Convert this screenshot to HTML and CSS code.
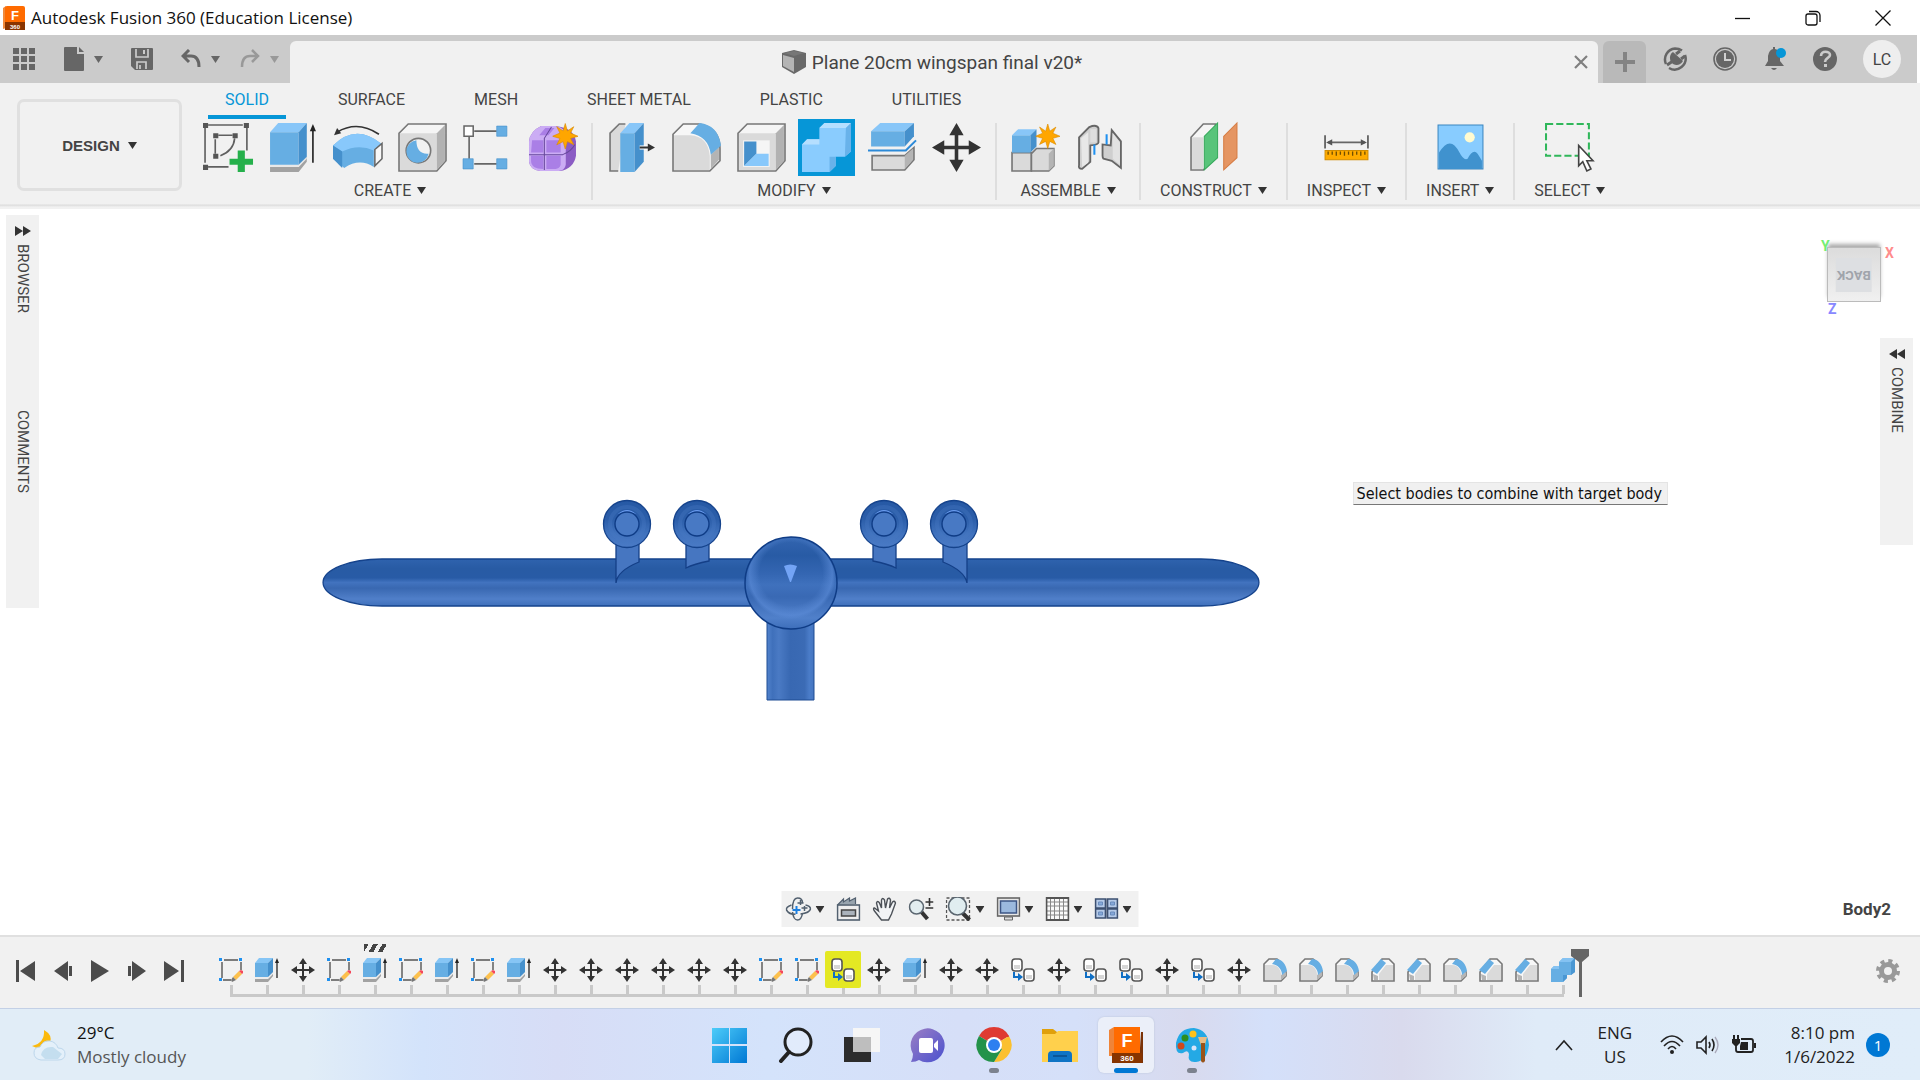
FILE: index.html
```html
<!DOCTYPE html>
<html lang="en">
<head>
    <meta charset="UTF-8">
    <meta name="viewport" content="width=device-width, initial-scale=1.0">
    <title>Autodesk Fusion 360 (Education License)</title>
    <link rel="stylesheet" href="styles.css">
</head>
<body>
    <!-- Shared icons -->
    <svg class="sprite" aria-hidden="true">
        <symbol id="i-sketch" viewBox="0 0 24 24">
            <path d="M3 4v16M5 2h14M22 4v8M4 22h8" stroke="#555" stroke-width="1.4" fill="none"/>
            <path d="M0 0h3v3H0zM20 0h3v3h-3zM0 20h3v3H0z" fill="#1e90f0"/>
            <path d="M14 19l6-6 3 3-6 6z" fill="#fcc04d"/>
            <path d="M20 13l2-1 2 1v2l-1 1z" fill="#f4475a"/>
            <path d="M14 19l3 3-4 2-1-2z" fill="#777"/>
        </symbol>
        <symbol id="i-extrude" viewBox="0 0 24 24">
            <path d="M0 20h13l5-6v4l-5 6H0z" fill="#a2a2a2"/>
            <path d="M0 19h13l5-5v2l-5 5H0z" fill="#ececec"/>
            <path d="M0 5l4-5h14l-5 5z" fill="#86c5f5"/>
            <path d="M0 5h13v14H0z" fill="#66aee3"/>
            <path d="M13 5l5-5v14l-5 5z" fill="#4590cc"/>
            <path d="M22 3v17" stroke="#222" stroke-width="1.3"/>
            <path d="M22 0l2 5h-4z" fill="#222"/>
        </symbol>
        <symbol id="i-move" viewBox="0 0 24 24">
            <path d="M12 3v18M3 12h18" stroke="#333" stroke-width="2"/>
            <path d="M12 0l4 6H8zM12 24l4-6H8zM0 12l6-4v8zM24 12l-6-4v8z" fill="#333"/>
        </symbol>
        <symbol id="i-copy" viewBox="0 0 24 24">
            <g fill="#fff" stroke="#555" stroke-width="1.6">
                <rect x="1" y="1" width="10" height="12" rx="3"/>
                <rect x="13" y="11" width="10" height="12" rx="3"/>
            </g>
            <path d="M3 7h6v4H3zM15 17h6v4h-6z" fill="#d6d6d6"/>
            <path d="M3 14v5h5" stroke="#0f6fc5" stroke-width="2" fill="none"/>
            <path d="M7 15l5 4-5 4z" fill="#0f6fc5"/>
        </symbol>
        <symbol id="i-fillet" viewBox="0 0 24 24">
            <path d="M1 23V6l5-5h8l5 4 4 9v4l-5 5z" fill="#f7f7f7" stroke="#777" stroke-width="1.6"/>
            <path d="M2 22V7h7c6 0 9 5 9 10v5z" fill="#dadada"/>
            <path d="M18 17l5-3v4l-5 4z" fill="#b5b5b5"/>
            <path d="M9 6l4-5c6 0 10 5 11 12l-5 4c0-6-4-10-10-11z" fill="#66aee3"/>
        </symbol>
        <symbol id="i-chamfer" viewBox="0 0 24 24">
            <path d="M1 23v-9L11 1h7l5 5v17H5z" fill="#f7f7f7" stroke="#777" stroke-width="1.6"/>
            <path d="M8 22V16L15 7h7v15z" fill="#dadada"/>
            <path d="M0 12L10 1l5 4L6 16z" fill="#66aee3"/>
            <path d="M2 16l5 2v4H3z" fill="#b5b5b5"/>
        </symbol>
        <symbol id="i-combine" viewBox="0 0 24 24">
            <path d="M0 24V11l3-3h5V4l4-4h12v14l-4 3h-4v3l-4 4z" fill="#66aee3"/>
            <path d="M8 4l4-4h12l-4 4zM0 11l3-3h5v3z" fill="#84c2f2"/>
            <path d="M20 4l4-4v14l-4 3zM12 17h4v3l-4 4z" fill="#4a97d3"/>
        </symbol>
        <symbol id="i-caret" viewBox="0 0 10 10"><path d="M0 1h10L5 9z" fill="currentColor"/></symbol>
        <symbol id="i-star" viewBox="0 0 24 24">
            <path d="M12 0l2 7 6-4-3 6 7 3-7 2 3 6-6-3-2 7-2-7-6 3 3-6-7-2 7-3-3-6 6 4z" fill="#ffa600" stroke="#d98a00" stroke-width=".6"/>
        </symbol>
        <linearGradient id="wing" x2="0" y2="1">
            <stop offset="0" stop-color="#2f63ae"/>
            <stop offset=".2" stop-color="#285ba4"/>
            <stop offset=".4" stop-color="#285ba6"/>
            <stop offset=".5" stop-color="#4273bf"/>
            <stop offset=".62" stop-color="#3968b1"/>
            <stop offset=".85" stop-color="#507fc9"/>
            <stop offset="1" stop-color="#3f70bb"/>
        </linearGradient>
        <linearGradient id="tail">
            <stop offset="0" stop-color="#5283cd"/>
            <stop offset=".12" stop-color="#3f70bb"/>
            <stop offset=".25" stop-color="#4a7ac4"/>
            <stop offset=".5" stop-color="#3868b2"/>
            <stop offset=".8" stop-color="#3b6bb5"/>
            <stop offset=".9" stop-color="#4a7cc8"/>
            <stop offset="1" stop-color="#4676c1"/>
        </linearGradient>
        <linearGradient id="nose" x2="0" y2="1">
            <stop offset="0" stop-color="#3365b0"/>
            <stop offset=".2" stop-color="#285ba5"/>
            <stop offset=".4" stop-color="#3466b2"/>
            <stop offset=".52" stop-color="#3f71bd"/>
            <stop offset=".65" stop-color="#3969b4"/>
            <stop offset=".88" stop-color="#5080ca"/>
            <stop offset="1" stop-color="#3d6eba"/>
        </linearGradient>
        <radialGradient id="nose-rim" cy=".4">
            <stop offset=".7" stop-color="#5c8cd8" stop-opacity="0"/>
            <stop offset=".92" stop-color="#5c8cd8" stop-opacity=".6"/>
            <stop offset="1" stop-color="#5c8cd8" stop-opacity="0"/>
        </radialGradient>
        <linearGradient id="engine" x2="0" y2="1">
            <stop offset="0" stop-color="#2659a5"/>
            <stop offset=".4" stop-color="#2c5ea9"/>
            <stop offset=".7" stop-color="#4072bd"/>
            <stop offset="1" stop-color="#4a7ac5"/>
        </linearGradient>
        <symbol id="engine-pod" viewBox="0 0 50 50">
            <circle cx="25" cy="25" r="23.500" fill="url(#engine)" stroke="#15438c" stroke-width="1.3"/>
            <circle cx="25" cy="25" r="17" fill="none" stroke="#4778c4" stroke-width="4" opacity=".35"/>
            <path d="M16 15q9-8 18 0-9-3-18 0z" fill="#6b9cf0"/>
            <circle cx="25" cy="25" r="12" fill="#4879c4" stroke="#0f3c86" stroke-width="1.4"/>
        </symbol>
    </svg>

    <header class="titlebar">
        <svg class="app-logo" viewBox="0 0 22 24"><path d="M0 2l3-2v22l-3 1z" fill="#f08a3c"/><rect x="2" width="20" height="20" rx="2" fill="#ff6b00"/><path d="M2 16h20v8H2z" fill="#8a3500"/><text x="12" y="14" class="logo-f">F</text><text x="12" y="23" class="logo-360">360</text></svg>
        <h1>Autodesk Fusion 360 (Education License)</h1>
        <div class="window-controls">
            <button aria-label="Minimize"><svg width="16" height="16" viewBox="0 0 16 16"><path d="M0 8.500h15"/></svg></button>
            <button aria-label="Restore"><svg width="16" height="16" viewBox="0 0 16 16"><rect x="1" y="4" width="11" height="11" rx="2"/><path d="M4 1.500h7a4 4 0 0 1 4 4V12"/></svg></button>
            <button aria-label="Close"><svg width="16" height="16" viewBox="0 0 16 16"><path d="M.5.500l15 15M15.500.500l-15 15"/></svg></button>
        </div>
    </header>

    <div class="appbar">
        <div class="quick-access">
            <button aria-label="Show data panel"><svg width="23" height="22" viewBox="0 0 23 22"><path d="M0 0h6v6H0zM8 0h6v6H8zM16 0h6v6h-6zM0 8h6v6H0zM8 8h6v6H8zM16 8h6v6h-6zM0 16h6v6H0zM8 16h6v6H8zM16 16h6v6h-6z" fill="#666"/></svg></button>
            <button aria-label="File"><svg width="20" height="24" viewBox="0 0 20 24"><path d="M1 0h12v7h7v16a1 1 0 0 1-1 1H1a1 1 0 0 1-1-1V1a1 1 0 0 1 1-1z" fill="#666"/><path d="M15 0l5 5h-5z" fill="#666"/></svg><svg class="caret"><use href="#i-caret"/></svg></button>
            <button aria-label="Save"><svg width="22" height="22" viewBox="0 0 22 22"><path d="M1 0h20a1 1 0 0 1 1 1v20a1 1 0 0 1-1 1H4l-4-4V1a1 1 0 0 1 1-1z" fill="#666"/><path d="M5 1v8h12V1M6 21v-7h9v7M9 17v4" fill="none" stroke="#cbcbcb" stroke-width="1.7"/><path d="M12 2h2v4h-2z" fill="#cbcbcb"/></svg></button>
            <button aria-label="Undo"><svg width="20" height="20" viewBox="0 0 20 20"><path d="M8 1L2 7l6 6M2 7h8c6 0 8 4 8 11" fill="none" stroke="#666" stroke-width="3"/></svg><svg class="caret"><use href="#i-caret"/></svg></button>
            <button class="faded" aria-label="Redo"><svg width="20" height="20" viewBox="0 0 20 20"><path d="M12 1l6 6-6 6M18 7h-8c-6 0-8 4-8 11" fill="none" stroke="#999" stroke-width="2.500"/></svg><svg class="caret"><use href="#i-caret"/></svg></button>
        </div>
        <div class="doc-tab">
            <div class="doc-title">
                <svg width="24" height="24" viewBox="0 0 24 24"><path d="M0 3l12-3 12 3v14l-12 7L0 17z" fill="#696969"/><path d="M1 5l11 3v14L1 16z" fill="#b4b4b4"/><path d="M2 3l10-2 10 2-10 3z" fill="#777"/></svg>
                <span>Plane 20cm wingspan final v20*</span>
            </div>
            <button class="tab-close" aria-label="Close tab"><svg width="14" height="14" viewBox="0 0 14 14"><path d="M1 1l12 12M13 1L1 13" stroke="#808080" stroke-width="2.200"/></svg></button>
        </div>
        <button class="new-tab" aria-label="New design"><svg width="20" height="20" viewBox="0 0 20 20"><path d="M10 0v20M0 10h20" stroke="#848484" stroke-width="4"/></svg></button>
        <div class="account">
            <button aria-label="Extensions"><svg width="24" height="24" viewBox="0 0 24 24"><path d="M3 17A11 11 0 0 1 12 1.500q4 0 7 2M22 8A11 11 0 0 1 6 21" fill="none" stroke="#666" stroke-width="2.500"/><path d="M4 18l6-4M13 7l4-3M18 12l4-3" stroke="#666" stroke-width="3"/><path d="M10 5l10 9c-3 5-9 5-12 1-2-4-1-8 2-10z" fill="#666"/></svg></button>
            <button aria-label="Job status"><svg width="24" height="24" viewBox="0 0 24 24"><circle cx="12" cy="12" r="11" fill="none" stroke="#666" stroke-width="1.600"/><circle cx="12" cy="12" r="9" fill="#666"/><path d="M12 6v7h6" fill="none" stroke="#d0d0d0" stroke-width="2"/></svg></button>
            <button aria-label="Notifications"><svg width="24" height="24" viewBox="0 0 24 24"><path d="M2 19l3-5V9q1-6 5-7V0h2v2q5 1 5 7v5l4 5z" fill="#666"/><path d="M8 21h6q-3 4-6 0z" fill="#666"/><circle cx="18" cy="6" r="5" fill="#0696d7"/></svg></button>
            <button aria-label="Help"><svg width="24" height="24" viewBox="0 0 24 24"><circle cx="12" cy="12" r="12" fill="#666"/><path d="M8 9c0-6 9-5 9-1 0 3-5 3-5 7" fill="none" stroke="#cbcbcb" stroke-width="2.600"/><path d="M11 17h3v3h-3z" fill="#cbcbcb"/></svg></button>
            <button class="avatar">LC</button>
        </div>
    </div>

    <section class="ribbon">
        <button class="workspace">DESIGN <svg class="caret"><use href="#i-caret"/></svg></button>
        <div class="ribbon-main">
            <nav class="ribbon-tabs">
                <a href="#" class="active">SOLID</a>
                <a href="#">SURFACE</a>
                <a href="#">MESH</a>
                <a href="#">SHEET METAL</a>
                <a href="#">PLASTIC</a>
                <a href="#">UTILITIES</a>
            </nav>
            <div class="tool-groups">
                <div class="group">
                    <div class="tools">
                        <button aria-label="Create sketch"><svg viewBox="0 0 48 48"><path d="M2 5v34M5 2h34M43 5v22M5 43h20M12 16v14M15 12h14M31 15q-1 12-14 17" fill="none" stroke="#606060" stroke-width="1.600"/><path d="M0 0h5v5H0zM40 0h5v5h-5zM0 41h5v5H0zM10 10h5v5h-5zM29 10h5v5h-5zM10 30h5v5h-5z" fill="#555"/><path d="M34 27h7v8h8v6h-8v7h-7v-7h-8v-6h8z" fill="#25b04b"/></svg></button>
                        <button aria-label="Extrude"><svg viewBox="0 0 48 48"><path d="M2 43h28l8-10v5L30 48H2z" fill="#a2a2a2"/><path d="M2 41h28l8-8v2l-8 8H2z" fill="#e8e8e8"/><path d="M2 9l8-9h28l-8 9z" fill="#88c6f8"/><path d="M2 9h28v32H2z" fill="#66aee3"/><path d="M30 9l8-9v33l-8 8z" fill="#4590cc"/><path d="M44 4v35" stroke="#222" stroke-width="1.600"/><path d="M44 1l3 7h-6z" fill="#222"/></svg></button>
                        <button aria-label="Revolve"><svg viewBox="0 0 48 48"><path d="M0 22q22-22 47-2l-7 6v17q-14-9-29 1L0 35z" fill="#66aee3"/><path d="M0 22q22-22 47-2l-7 7q-15-7-31 1z" fill="#88c8fb"/><path d="M0 22l9 6v16L0 35z" fill="#4590cc"/><path d="M41 26l7-6v15l-7 7z" fill="#f8f8f8" stroke="#666" stroke-width="1.500"/><path d="M4 9Q24-3 45 11" fill="none" stroke="#333" stroke-width="1.600"/><path d="M1 12l3-7 4 5z" fill="#333"/></svg></button>
                        <button aria-label="Hole"><svg viewBox="0 0 48 48"><path d="M1 10l9-9h37v36l-9 10H1z" fill="#f5f5f5" stroke="#777" stroke-width="1.600"/><path d="M2 10h36v36H2z" fill="#dadada"/><path d="M38 10l8-8v35l-8 9z" fill="#b2b2b2"/><circle cx="20" cy="27" r="12" fill="#f2f2f2" stroke="#777" stroke-width="1.600"/><path d="M18 17a11 11 0 1 0 12 13q-12 1-12-13z" fill="#66aee3"/></svg></button>
                        <button aria-label="Rectangular pattern"><svg viewBox="0 0 48 48"><path d="M11 8h22M6 13v22M11 40h22" stroke="#666" stroke-width="1.600"/><path d="M1 3h9v10H1z" fill="#fff" stroke="#666" stroke-width="1.500"/><path d="M33 3h10v10H33zM0 35h10v10H0zM33 35h10v10H33z" fill="#66aee3" stroke="#4590cc" stroke-width=".6"/></svg></button>
                        <button aria-label="Create form"><svg viewBox="0 0 48 48"><path d="M1 38V18Q2 8 13 3h14q18 2 20 15v14q-2 12-15 15H12Q2 46 1 38z" fill="#8b5cc4"/><path d="M1 38V18Q2 8 13 3h14q11 2 12 12l-2 8v18q-1 6-7 6H12Q2 46 1 38z" fill="#cbacf4"/><path d="M4 17h11v12H3zM18 17h14v12H18zM3 32h12v13q-12 0-12-8zM18 32h14v9q-1 4-5 4h-9zM17 5h9l-6 7h-9z" fill="#aa7fe6"/><path d="M16 46V15l7-11M1 31h33q8-3 12-10" fill="none" stroke="#66479a"/><use href="#i-star" x="24" width="25" height="26"/></svg></button>
                    </div>
                    <button class="group-label">CREATE <svg class="caret"><use href="#i-caret"/></svg></button>
                </div>
                <div class="group">
                    <div class="tools">
                        <button aria-label="Press pull"><svg viewBox="0 0 48 48"><path d="M11 47H3V10l9-9h6" fill="#dadada" stroke="#777" stroke-width="1.600"/><path d="M13 10l9-10h14l-9 10z" fill="#88c6f8"/><path d="M13 10h14v38H13z" fill="#66aee3"/><path d="M27 10l9-10v38l-9 10z" fill="#4590cc"/><path d="M32 24h10" stroke="#fff" stroke-width="4"/><path d="M32 24h10" stroke="#333" stroke-width="2"/><path d="M40 20l7 4-7 4z" fill="#333"/></svg></button>
                        <button aria-label="Fillet"><svg viewBox="0 0 48 48"><path d="M1 47V11l10-10h16q20 4 20 24v12L37 47z" fill="#f7f7f7" stroke="#777" stroke-width="1.600"/><path d="M2 46V12h16q17 1 19 20v14z" fill="#dadada"/><path d="M38 31l8-8v13l-8 9z" fill="#b4b4b4"/><path d="M18 10L27 0q18 2 21 22l-10 9q-2-18-20-21z" fill="#66aee3"/></svg></button>
                        <button aria-label="Shell"><svg viewBox="0 0 48 48"><path d="M1 10l9-9h37v36l-9 10H1z" fill="#f5f5f5" stroke="#777" stroke-width="1.600"/><path d="M2 10h36v36H2z" fill="#dadada"/><path d="M38 10l8-8v35l-8 9z" fill="#b2b2b2"/><path d="M6 17h26v26H6z" fill="#f5f5f5"/><path d="M7 18h12v12L7 42z" fill="#4590cc"/><path d="M19 30h12v12H7z" fill="#88c8fb"/></svg></button>
                        <button class="selected" aria-label="Combine"><svg viewBox="0 0 48 48"><path d="M0 48V21l5-5h12V5l5-5h26v28l-6 5H33v9l-6 6z" fill="#8accfe"/><path d="M17 5l5-5h26l-5 5zM0 21l5-5h12v5z" fill="#b5dfff"/><path d="M43 5l5-5v28l-6 5zM27 33h6v9l-6 6z" fill="#68b2ea"/></svg></button>
                        <button aria-label="Split body"><svg viewBox="0 0 48 48"><path d="M4 8l9-8h33l-9 8z" fill="#88c6f8"/><path d="M4 8h33v15H4z" fill="#66aee3"/><path d="M37 8l9-8v13l-9 10z" fill="#4590cc"/><path d="M1 27h37L48 17" fill="none" stroke="#2c8ad8" stroke-width="2"/><path d="M5 32h32l9-8v12l-9 10H5z" fill="#dadada" stroke="#777" stroke-width="1.600"/><path d="M37 32l8-7v11l-8 9z" fill="#b4b4b4"/></svg></button>
                        <button aria-label="Move/Copy"><svg viewBox="0 0 48 48"><path d="M24 8v32M8 24h32" stroke="#333" stroke-width="3.500"/><path d="M24 0l7 12H17zM24 48l7-12H17zM0 24l12-7v14zM48 24l-12-7v14z" fill="#333"/></svg></button>
                    </div>
                    <button class="group-label">MODIFY <svg class="caret"><use href="#i-caret"/></svg></button>
                </div>
                <div class="group">
                    <div class="tools">
                        <button aria-label="New component"><svg viewBox="0 0 48 48"><path d="M1 29h19v18H1z" fill="#dadada" stroke="#777" stroke-width="1.600"/><path d="M20 30l5-5h17v17l-5 5H20z" fill="#dadada" stroke="#777" stroke-width="1.600"/><path d="M37 30l5-5v17l-5 5z" fill="#b4b4b4"/><path d="M1 12h18v17H1z" fill="#66aee3"/><path d="M1 12l6-6h18l-6 6z" fill="#88c6f8"/><path d="M19 12l6-6v17l-6 6z" fill="#4590cc"/><use href="#i-star" x="24" width="24" height="26"/></svg></button>
                        <button aria-label="Joint"><svg viewBox="0 0 48 48"><path d="M3 14L13 4q7-3 9 1v14q0 2-8 3v16L6 45q-4 0-3-4z" fill="#cfcfcf" stroke="#666" stroke-width="1.800"/><path d="M5 15l7-6v30l-6 4z" fill="#e8e8e8"/><path d="M14 6h6v13h-6z" fill="#dedede"/><path d="M35 7l9 11v26l-9-7-8-2q-1-1-1-3V21l8 1z" fill="#cfcfcf" stroke="#666" stroke-width="1.800"/><path d="M36 10l7 9v22l-7-6z" fill="#e2e2e2"/><path d="M18 21v10M30 11v10" stroke="#1e90f0" stroke-width="2"/></svg></button>
                    </div>
                    <button class="group-label">ASSEMBLE <svg class="caret"><use href="#i-caret"/></svg></button>
                </div>
                <div class="group">
                    <div class="tools">
                        <button aria-label="Offset plane"><svg viewBox="0 0 48 48"><path d="M14 46H2V14L14 1h12v32z" fill="#f5f5f5" stroke="#777" stroke-width="1.600"/><path d="M3 14h11v31H3z" fill="#dadada"/><path d="M15 13L28 0v34L15 46z" fill="#58c47a" stroke="#37a95b"/><path d="M34 13L47 0v34L34 46z" fill="#e59562" stroke="#d67d45"/></svg></button>
                    </div>
                    <button class="group-label">CONSTRUCT <svg class="caret"><use href="#i-caret"/></svg></button>
                </div>
                <div class="group">
                    <div class="tools">
                        <button aria-label="Measure"><svg viewBox="0 0 48 48"><path d="M3 12v13M45 12v13M6 19h36" stroke="#666" stroke-width="1.800"/><path d="M4 19l6-3v6zM44 19l-6-3v6z" fill="#555"/><path d="M3 27h42v9H3z" fill="#ffab00" stroke="#d18c00"/><path d="M6 28v3M10 28v3M14 28v4M18 28v3M22 28v4M26 28v3M30 28v4M34 28v3M38 28v4M42 28v3" stroke="#704e00" stroke-width="1.300"/></svg></button>
                    </div>
                    <button class="group-label">INSPECT <svg class="caret"><use href="#i-caret"/></svg></button>
                </div>
                <div class="group">
                    <div class="tools">
                        <button aria-label="Insert canvas"><svg viewBox="0 0 48 48"><path d="M2 2h44v43H2z" fill="#88ccff" stroke="#3b86c0"/><path d="M3 29q11-18 20 0 4 8 8 6 6-12 11-3l3 5v8H3z" fill="#4092ce"/><circle cx="33" cy="14" r="5" fill="#fffbd0"/></svg></button>
                    </div>
                    <button class="group-label">INSERT <svg class="caret"><use href="#i-caret"/></svg></button>
                </div>
                <div class="group">
                    <div class="tools">
                        <button aria-label="Select"><svg viewBox="0 0 48 48"><path d="M1 1h42v31H1z" fill="none" stroke="#2fb75a" stroke-width="2" stroke-dasharray="7 3"/><path d="M33 22v20l4-4 4 9 4-2-4-8h6z" fill="#fff" stroke="#444" stroke-width="1.600"/></svg></button>
                    </div>
                    <button class="group-label">SELECT <svg class="caret"><use href="#i-caret"/></svg></button>
                </div>
            </div>
        </div>
    </section>

    <main class="viewport">
        <svg class="model" viewBox="0 0 1920 726">
            <path d="M767 380h47v111h-47z" fill="url(#tail)" stroke="#1f4c93"/>
            <path d="M382 350h819a58 23.500 0 0 1 0 47H382a59 23.500 0 0 1 0-47z" fill="url(#wing)" stroke="#15438c" stroke-width="1.300"/>
            <g fill="#4676c1" stroke="#143f87" stroke-width="1.300">
                <path d="M616 334v40q1-12 23-21v-19z"/>
                <path d="M686 334v25q8-4 23-7v-18z"/>
                <path d="M873 334v18q15 3 23 7v-25z"/>
                <path d="M943 334v19q22 9 24 21v-40z"/>
            </g>
            <use href="#engine-pod" x="602" y="290" width="50" height="50"/>
            <use href="#engine-pod" x="672" y="290" width="50" height="50"/>
            <use href="#engine-pod" x="859" y="290" width="50" height="50"/>
            <use href="#engine-pod" x="929" y="290" width="50" height="50"/>
            <circle cx="791" cy="374" r="46" fill="url(#nose)" stroke="#0f3c86" stroke-width="1.500"/>
            <circle cx="791" cy="374" r="45" fill="url(#nose-rim)"/>
            <path d="M784 357q6-3 13 0l-6 16h-1z" fill="#73a4f5"/>
        </svg>

        <aside class="side-panel left">
            <svg width="16" height="10" viewBox="0 0 16 10"><path d="M0 0l8 5-8 5zM8 0l8 5-8 5z" fill="#333"/></svg>
            <button>BROWSER</button>
            <button class="comments">COMMENTS</button>
        </aside>
        <aside class="side-panel right">
            <svg width="16" height="10" viewBox="0 0 16 10"><path d="M8 0L0 5l8 5zM16 0L8 5l8 5z" fill="#333"/></svg>
            <button>COMBINE</button>
        </aside>

        <div class="viewcube">
            <span class="axis y">Y</span>
            <div class="cube-face"><span>BACK</span></div>
            <span class="axis x">X</span>
            <span class="axis z">Z</span>
        </div>

        <div class="hint" role="tooltip">Select bodies to combine with target body</div>

        <div class="nav-bar">
            <button aria-label="Orbit"><svg width="26" height="24" viewBox="0 0 26 24"><g fill="none" stroke="#52606f" stroke-width="1.500"><path d="M7 12q0-11 5-11t5 5M17 16q-1 7-5 7t-5-8"/><path d="M6 8q-6 2-5 5 3 5 9 4M15 17q9-1 10-5 0-3-5-4"/><path d="M15 3v5M12 6h6M19 9v5M16 11h6"/></g><path d="M11 9v8M7 13h8" stroke="#1e80e0" stroke-width="2"/></svg><svg class="caret"><use href="#i-caret"/></svg></button>
            <button aria-label="Look at"><svg width="24" height="24" viewBox="0 0 24 24"><path d="M1 8l6-6v3l6-4v3l6-3v6" fill="#98a4ae" stroke="#52606f" stroke-width="1.200"/><rect x="1" y="8" width="22" height="15" fill="#eee" stroke="#52606f" stroke-width="1.600"/><rect x="5" y="13" width="14" height="6" fill="#aab2bb" stroke="#444" stroke-width="1.500"/></svg></button>
            <button aria-label="Pan"><svg width="24" height="24" viewBox="0 0 24 24"><path d="M9 23L2 14q-2-3 0-3l4 3-2-8q1-3 3 0l2 5V3q1-3 3 0l1 8 2-9q2-2 3 1l-1 8 3-6q2-2 3 1l-4 11-3 6z" fill="#f2f4f6" stroke="#4c5158" stroke-width="1.400"/></svg></button>
            <button aria-label="Zoom"><svg width="25" height="24" viewBox="0 0 25 24"><path d="M13 15l6 7" stroke="#333" stroke-width="4"/><circle cx="8" cy="10" r="7" fill="#e2edf0" stroke="#5b6670" stroke-width="1.600"/><path d="M21 1v8M17 5h8M17 11h8" stroke="#333" stroke-width="1.600"/></svg></button>
            <button aria-label="Fit"><svg width="26" height="24" viewBox="0 0 26 24"><path d="M1 1h23v22H1z" fill="none" stroke="#555" stroke-width="1.300" stroke-dasharray="3 2"/><path d="M17 16l7 7" stroke="#333" stroke-width="4"/><circle cx="12" cy="9" r="9" fill="#e0edf0" stroke="#5b6670" stroke-width="1.600"/></svg><svg class="caret"><use href="#i-caret"/></svg></button>
            <button aria-label="Display settings"><svg width="24" height="24" viewBox="0 0 24 24"><rect x="1" y="1" width="22" height="18" fill="#e8e8e8" stroke="#666" stroke-width="1.600"/><rect x="4" y="4" width="16" height="12" fill="#9bb9de" stroke="#3d5685" stroke-width="1.500"/><path d="M8 20h8v3H8z" fill="#ddd" stroke="#666"/></svg><svg class="caret"><use href="#i-caret"/></svg></button>
            <button aria-label="Grid and snaps"><svg width="24" height="24" viewBox="0 0 24 24"><path d="M1 1h22v22H1z" fill="#fafafa"/><path d="M5 1v22M9 1v22M14 1v22M18 1v22M1 5h22M1 9h22M1 14h22M1 18h22" stroke="#888"/><path d="M1 1h22v22H1z" fill="none" stroke="#555" stroke-width="1.800"/></svg><svg class="caret"><use href="#i-caret"/></svg></button>
            <button aria-label="Viewports"><svg width="24" height="24" viewBox="0 0 24 24"><path d="M1 2h10v9H1zM13 2h10v9H13zM1 12h10v9H1zM13 12h10v9H13z" fill="#b5cae8" stroke="#3d5070" stroke-width="1.700"/><path d="M4 5h4v3H4zM16 5h4v3h-4zM4 15h4v3H4zM16 15h4v3h-4z" fill="#86a9d9" stroke="#6a8cbd"/></svg><svg class="caret"><use href="#i-caret"/></svg></button>
        </div>
        <div class="selection-name">Body2</div>
    </main>

    <section class="timeline">
        <div class="playback">
            <button aria-label="Go to start"><svg viewBox="0 0 20 22"><path d="M0 0h3v22H0zM19 1v20L4 11z"/></svg></button>
            <button aria-label="Step back"><svg viewBox="0 0 20 22"><path d="M15 1v20L1 11zM16 6h3v10h-3z"/></svg></button>
            <button aria-label="Play"><svg viewBox="0 0 20 22"><path d="M1 0l18 11L1 22z"/></svg></button>
            <button aria-label="Step forward"><svg viewBox="0 0 20 22"><path d="M5 1v20l14-10zM1 6h3v10H1z"/></svg></button>
            <button aria-label="Go to end"><svg viewBox="0 0 20 22"><path d="M17 0h3v22h-3zM0 1v20l15-10z"/></svg></button>
        </div>
        <ol class="features">
            <li><svg><use href="#i-sketch"/></svg></li>
            <li><svg><use href="#i-extrude"/></svg></li>
            <li><svg><use href="#i-move"/></svg></li>
            <li><svg><use href="#i-sketch"/></svg></li>
            <li class="flagged"><svg><use href="#i-extrude"/></svg></li>
            <li><svg><use href="#i-sketch"/></svg></li>
            <li><svg><use href="#i-extrude"/></svg></li>
            <li><svg><use href="#i-sketch"/></svg></li>
            <li><svg><use href="#i-extrude"/></svg></li>
            <li><svg><use href="#i-move"/></svg></li>
            <li><svg><use href="#i-move"/></svg></li>
            <li><svg><use href="#i-move"/></svg></li>
            <li><svg><use href="#i-move"/></svg></li>
            <li><svg><use href="#i-move"/></svg></li>
            <li><svg><use href="#i-move"/></svg></li>
            <li><svg><use href="#i-sketch"/></svg></li>
            <li><svg><use href="#i-sketch"/></svg></li>
            <li class="warning"><svg><use href="#i-copy"/></svg></li>
            <li><svg><use href="#i-move"/></svg></li>
            <li><svg><use href="#i-extrude"/></svg></li>
            <li><svg><use href="#i-move"/></svg></li>
            <li><svg><use href="#i-move"/></svg></li>
            <li><svg><use href="#i-copy"/></svg></li>
            <li><svg><use href="#i-move"/></svg></li>
            <li><svg><use href="#i-copy"/></svg></li>
            <li><svg><use href="#i-copy"/></svg></li>
            <li><svg><use href="#i-move"/></svg></li>
            <li><svg><use href="#i-copy"/></svg></li>
            <li><svg><use href="#i-move"/></svg></li>
            <li><svg><use href="#i-fillet"/></svg></li>
            <li><svg><use href="#i-fillet"/></svg></li>
            <li><svg><use href="#i-fillet"/></svg></li>
            <li><svg><use href="#i-chamfer"/></svg></li>
            <li><svg><use href="#i-chamfer"/></svg></li>
            <li><svg><use href="#i-fillet"/></svg></li>
            <li><svg><use href="#i-chamfer"/></svg></li>
            <li><svg><use href="#i-chamfer"/></svg></li>
            <li class="last"><svg><use href="#i-combine"/></svg><svg class="marker" viewBox="0 0 18 48"><path d="M0 0h18v7l-7 6v35H8V13L0 7z" fill="#666"/></svg></li>
        </ol>
        <button class="settings" aria-label="Timeline settings"><svg width="24" height="24" viewBox="0 0 24 24"><circle cx="12" cy="12" r="6.500" fill="none" stroke="#999" stroke-width="5"/><circle cx="12" cy="12" r="10" fill="none" stroke="#999" stroke-width="4" stroke-dasharray="4 3.850"/></svg></button>
    </section>

    <footer class="taskbar">
        <button class="weather">
            <svg width="34" height="34" viewBox="0 0 34 34"><path d="M12 2q9 5 6 13-7 9-18 3 13-3 12-16z" fill="#fbb90c"/><path d="M9 32q-7-1-7-7 0-6 6-6 3-7 10-6 6 1 8 7 7 0 7 6t-7 6z" fill="#e4f0fa" stroke="#bdd7ec"/><path d="M9 27q2-9 12-8l9 7-4 5H13z" fill="#c4deef"/></svg>
            <span><b>29°C</b><br>Mostly cloudy</span>
        </button>
        <nav class="apps">
            <button aria-label="Start"><svg viewBox="0 0 36 36"><defs><linearGradient id="win" x2="1" y2="1"><stop stop-color="#4dccf9"/><stop offset="1" stop-color="#0078d4"/></linearGradient></defs><path d="M0 1h17v16H0zM18 1h17v16H18zM0 19h17v17H0zM18 19h17v17H18z" fill="url(#win)"/></svg></button>
            <button aria-label="Search"><svg viewBox="0 0 36 36"><circle cx="20" cy="15" r="13" fill="#fff" fill-opacity=".3" stroke="#222" stroke-width="3"/><path d="M11 25l-8 9" stroke="#222" stroke-width="4" stroke-linecap="round"/></svg></button>
            <button aria-label="Task view"><svg viewBox="0 0 36 36"><path d="M0 10h27v25H0z" fill="#2c2c2c"/><path d="M9 1h27v24H9z" fill="#f6f6f6"/><path d="M9 10h18v15H9z" fill="#bebebe"/></svg></button>
            <button aria-label="Chat"><svg viewBox="0 0 36 36"><defs><linearGradient id="chat" x2="1" y2="1"><stop stop-color="#9c7fc4"/><stop offset="1" stop-color="#4a51cf"/></linearGradient></defs><path d="M1 35q2-4 2-8A17 17 0 1 1 9 33q-3 2-8 2z" fill="url(#chat)"/><rect x="9" y="11" width="14" height="15" rx="2" fill="#fff"/><path d="M24 17l4-4v11l-4-4z" fill="#fff"/></svg></button>
            <button class="running" aria-label="Chrome"><svg viewBox="0 0 36 36"><path d="M18 18L3 9a17 17 0 0 1 30 0z" fill="#df3a32"/><path d="M18 18L33 9a17 17 0 0 1-15 26l8-13z" fill="#fbc02e"/><path d="M18 18l8 4-8 13A17 17 0 0 1 3 9z" fill="#23924a"/><path d="M18 10h15l-1-2H18z" fill="#df3a32"/><circle cx="18" cy="18" r="8" fill="#fff"/><circle cx="18" cy="18" r="6" fill="#2d7ff0"/></svg></button>
            <button aria-label="File Explorer"><svg viewBox="0 0 36 36"><path d="M0 2h11l4 3v5H0z" fill="#e0a00b"/><path d="M0 7h13l3-3h20v31H0z" fill="#ffd04c"/><path d="M6 35V28q0-4 4-4h16q4 0 4 4v7z" fill="#0f74c5"/><path d="M11 29h14" stroke="#0a4c8a" stroke-width="1.500"/></svg></button>
            <button class="running current" aria-label="Fusion 360"><svg viewBox="0 0 36 36"><path d="M1 3l5-3v29H1z" fill="#ef8438"/><path d="M33 5h2v31h-4z" fill="#7a3208"/><path d="M6 0h26v27H6z" fill="#ff6b00"/><path d="M4 26h30v10H4z" fill="#873400"/><text x="19" y="20" class="task-f">F</text><text x="19" y="34" class="task-360">360</text></svg></button>
            <button class="running" aria-label="Paint"><svg viewBox="0 0 36 36"><path d="M2 16Q5 1 20 1q14 2 15 17-2 16-13 17-9 1-7-8-1-5-6-1-8 2-7-10z" fill="#24a9e5"/><circle cx="19" cy="7" r="3.500" fill="#ffc21a"/><circle cx="11" cy="11" r="3.500" fill="#2c8e20"/><circle cx="7" cy="19" r="3.500" fill="#d0481c"/><circle cx="20" cy="21" r="2.500" fill="#d6e4fa"/><path d="M24 10h9l-2 8h-4z" fill="#e8bd87"/><path d="M27 16h4v18q-2 3-4 0z" fill="#99541a"/></svg></button>
        </nav>
        <div class="tray">
            <button aria-label="Show hidden icons"><svg width="18" height="12" viewBox="0 0 18 12"><path d="M1 11l8-9 8 9" fill="none" stroke="#222" stroke-width="1.600"/></svg></button>
            <button class="lang">ENG<br>US</button>
            <button class="status" aria-label="Network, volume and battery">
                <svg width="24" height="20" viewBox="0 0 24 20"><path d="M1 7q11-12 22 0M4 11q8-9 16 0M8 14q4-5 8 0" fill="none" stroke="#222" stroke-width="1.600"/><circle cx="12" cy="17" r="2" fill="#222"/></svg>
                <svg width="24" height="20" viewBox="0 0 24 20"><path d="M1 7h4l5-5v16l-5-5H1zM13 7q2 3 0 6M16 4q4 6 0 12" fill="none" stroke="#222" stroke-width="1.600"/><path d="M19 2q6 8 0 16" fill="none" stroke="#aab" stroke-width="1.400"/></svg>
                <svg width="24" height="20" viewBox="0 0 24 20"><path d="M9 4h10q2 0 2 2v9q0 2-2 2H6q-2 0-2-2v-4" fill="none" stroke="#222" stroke-width="1.800"/><path d="M22 8h2v5h-2zM9 7h7v8H8v-4zM0 4h8v4l-3 3H3L0 8zM1 0h2v4H1zM5 0h2v4H5z" fill="#222"/></svg>
            </button>
            <time class="clock">8:10 pm<br>1/6/2022</time>
            <span class="badge">1</span>
        </div>
    </footer>
</body>
</html>
```
FILE: styles.css
```css
* {
    margin: 0;
    padding: 0;
    box-sizing: border-box;
}

body {
    display: flex;
    flex-direction: column;
    height: 100vh;
    overflow: hidden;
    font-family: Roboto, "Liberation Sans", sans-serif;
    font-size: 15px;
    color: #444;
    background: #fff;
}

button {
    border: none;
    background: none;
    font: inherit;
    color: inherit;
    display: flex;
    align-items: center;
    justify-content: center;
}

a {
    color: inherit;
    text-decoration: none;
}

svg {
    display: block;
    flex-shrink: 0;
}

.sprite {
    position: absolute;
    width: 0;
    height: 0;
}

.caret {
    width: 9px;
    height: 9px;
    color: #333;
}

/* Title bar */
.titlebar {
    display: flex;
    align-items: center;
    height: 35px;
    padding: 0 2px 0 3px;
    flex-shrink: 0;
    font-family: "Open Sans", "Noto Sans", sans-serif;
    color: #111;
}

.titlebar h1 {
    flex: 1;
    margin-left: 6px;
    font-size: 17px;
    font-weight: 400;
}

.app-logo {
    width: 22px;
    height: 24px;
}

.logo-f,
.logo-360,
.task-f,
.task-360 {
    fill: #fff;
    text-anchor: middle;
    font-family: "Liberation Sans", sans-serif;
    font-weight: 700;
}

.logo-f {
    font-size: 13px;
}

.logo-360 {
    font-size: 6px;
}

.task-f {
    font-size: 18px;
}

.task-360 {
    font-size: 8px;
}

.window-controls {
    display: flex;
}

.window-controls button {
    width: 70px;
    height: 34px;
}

.window-controls svg {
    fill: none;
    stroke: #111;
    stroke-width: 1.3;
}

/* Document tab row */
.appbar {
    display: flex;
    align-items: flex-end;
    height: 48px;
    margin-right: 3px;
    flex-shrink: 0;
    background: #cbcbcb;
}

.quick-access {
    display: flex;
    align-items: center;
    gap: 28px;
    width: 290px;
    height: 48px;
    padding-left: 13px;
}

.quick-access button {
    gap: 10px;
}

.quick-access .faded {
    margin-left: -8px;
}

.quick-access .caret {
    color: #666;
}

.quick-access .faded .caret {
    color: #999;
}

.doc-tab {
    flex: 1;
    display: flex;
    align-items: center;
    height: 42px;
    padding-right: 10px;
    border-radius: 6px 6px 0 0;
    background: #f1f1f1;
}

.doc-title {
    flex: 1;
    display: flex;
    align-items: center;
    justify-content: center;
    gap: 6px;
    font-size: 19px;
}

.new-tab {
    width: 43px;
    height: 42px;
    margin-left: 5px;
    border-radius: 6px 6px 0 0;
    background: #b9b9b9;
}

.account {
    display: flex;
    align-items: center;
    gap: 26px;
    height: 48px;
    padding: 0 16px 0 17px;
}

.account .avatar {
    width: 38px;
    height: 38px;
    border-radius: 50%;
    background: #eee;
    font-size: 16px;
}

/* Ribbon */
.ribbon {
    display: flex;
    height: 126px;
    flex-shrink: 0;
    background: linear-gradient(#f1f1f1 121px, #dcdcdc 122px, #f1f1f1 124px);
}

.workspace {
    width: 165px;
    height: 92px;
    margin: 16px 7px 0 17px;
    gap: 8px;
    border: 3px solid #e0e0e0;
    border-radius: 7px;
    font-family: "Liberation Sans", sans-serif;
    font-weight: 700;
}

.ribbon-tabs {
    display: flex;
    gap: 35px;
    margin-left: 19px;
    font-size: 16px;
}

.ribbon-tabs a {
    height: 36px;
    padding: 7px 17px 0;
    line-height: 20px;
    border-bottom: 4px solid transparent;
}

.ribbon-tabs .active {
    color: #0696d7;
    border-color: #0696d7;
}

.tool-groups {
    display: flex;
}

.group {
    display: flex;
    flex-direction: column;
    align-items: center;
    height: 85px;
    padding: 0 8px 0 6px;
    background: linear-gradient(#dedede, #dedede) right top 4px / 2px 77px no-repeat;
}

.group:last-child {
    background: none;
}

.tools {
    display: flex;
    height: 57px;
}

.tools button {
    width: 65px;
    padding: 0 4px;
}

.tools svg {
    width: 49px;
    height: 49px;
    overflow: visible;
}

.tools .selected {
    width: 57px;
    margin: 0 4px;
    background: #0696d7;
}

.group-label {
    gap: 6px;
    height: 28px;
    padding: 0 13px;
    font-size: 16px;
    flex-shrink: 0;
}

/* Canvas */
.viewport {
    position: relative;
    flex: 1;
    min-height: 0;
}

.model {
    width: 100%;
    height: 100%;
}

.side-panel {
    position: absolute;
    display: flex;
    flex-direction: column;
    align-items: center;
    width: 33px;
    padding-top: 11px;
    background: #f1f1f1;
}

.side-panel button {
    writing-mode: vertical-rl;
    width: 20px;
    margin-top: 8px;
    font-size: 15px;
}

.side-panel.left {
    left: 6px;
    top: 6px;
    height: 393px;
}

.side-panel.right {
    right: 7px;
    top: 129px;
    height: 207px;
}

.side-panel .comments {
    margin-top: 97px;
}

.viewcube {
    position: absolute;
    right: 39px;
    top: 38px;
    width: 54px;
    height: 55px;
}

.cube-face {
    display: flex;
    align-items: center;
    justify-content: center;
    height: 55px;
    border: 1px solid #bbb;
    background: linear-gradient(#dcdcdc, #f0f0f0);
    box-shadow: 0 -4px 4px -1px #aaa;
}

.cube-face span {
    padding: 9px 1px;
    font-size: 13px;
    font-weight: 700;
    line-height: 16px;
    color: #a0a4ab;
    background: #dddfe2;
    transform: rotate(180deg);
}

.axis {
    position: absolute;
    font-size: 14px;
    line-height: 14px;
    font-weight: 700;
}

.axis.y {
    left: -6px;
    top: -8px;
    color: #74ee74;
}

.axis.x {
    right: -13px;
    top: -1px;
    color: #ff8c8c;
}

.axis.z {
    left: 1px;
    bottom: -14px;
    color: #8888ff;
}

.hint {
    position: absolute;
    right: 252px;
    top: 273px;
    padding: 1px 5px 0 3px;
    border: 1px solid #e4e4e4;
    border-bottom-color: #777;
    background: #f0f0f0;
    font-family: "DejaVu Sans Condensed", "DejaVu Sans", sans-serif;
    font-size: 16px;
    line-height: 20px;
    color: #111;
}

.nav-bar {
    position: absolute;
    left: 50%;
    bottom: 8px;
    transform: translateX(-50%);
    display: flex;
    align-items: center;
    gap: 12px;
    height: 36px;
    padding: 0 7px 0 4px;
    background: #f1f1f1;
}

.nav-bar button {
    gap: 4px;
}

.selection-name {
    position: absolute;
    right: 29px;
    bottom: 16px;
    font-size: 17px;
    line-height: 20px;
    font-weight: 700;
}

/* Timeline */
.timeline {
    display: flex;
    align-items: center;
    height: 73px;
    padding: 0 20px 3px 16px;
    flex-shrink: 0;
    border-top: 2px solid #e0e0e0;
    background: #f1f1f1;
}

.playback {
    display: flex;
    gap: 17px;
}

.playback svg {
    width: 20px;
    height: 24px;
    fill: #4c4c4c;
}

.features {
    flex: 1;
    display: flex;
    list-style: none;
    margin-left: 29px;
}

.features li {
    position: relative;
    display: flex;
    justify-content: center;
    width: 36px;
    height: 48px;
    padding-top: 8px;
    margin-top: 4px;
    /* tick and base line under each feature */
    background:
        linear-gradient(#c9c9c9, #c9c9c9) center bottom 3px / 3px 9px no-repeat,
        linear-gradient(#c9c9c9, #c9c9c9) center bottom / 100% 3px no-repeat;
}

.features li:first-child {
    background:
        linear-gradient(#c9c9c9, #c9c9c9) center bottom 3px / 3px 9px no-repeat,
        linear-gradient(#c9c9c9, #c9c9c9) right bottom / 19px 3px no-repeat;
}

.features .last {
    background:
        linear-gradient(#c9c9c9, #c9c9c9) center bottom 3px / 3px 9px no-repeat,
        linear-gradient(#c9c9c9, #c9c9c9) left bottom / 19px 3px no-repeat;
}

.features svg {
    position: relative;
    width: 24px;
    height: 26px;
}

.features .warning::before {
    content: "";
    position: absolute;
    left: 0;
    top: 2px;
    width: 36px;
    height: 37px;
    border-radius: 2px;
    background: #e4e823;
}

.features .flagged::before {
    content: "";
    position: absolute;
    left: 7px;
    top: -5px;
    width: 22px;
    height: 8px;
    background: repeating-linear-gradient(120deg, #444 0 4px, transparent 4px 8px);
}

.features .marker {
    position: absolute;
    left: 26px;
    top: 0;
    width: 18px;
    height: 48px;
}

/* Taskbar */
.taskbar {
    display: grid;
    grid-template-columns: 1fr auto 1fr;
    align-items: center;
    height: 72px;
    padding: 0 30px 0 32px;
    flex-shrink: 0;
    border-top: 1px solid #c3d0e6;
    background: linear-gradient(90deg, #e1edf7 0, #e1edf7 16%, #d3e3fb 22%, #d7ddf6 29%, #d4e3fb 40%, #d6dff8 50%, #d5e0f9 56%, #d8daee 62%, #d4e0fa 66%, #d9daed 73%, #dfebf8 80%, #e0edf9 100%);
    font-family: "Open Sans", "Noto Sans", sans-serif;
    font-size: 17px;
    line-height: 24px;
    color: #222;
}

.weather {
    justify-self: start;
    gap: 11px;
    text-align: left;
    color: #555;
}

.weather b {
    font-weight: 400;
    color: #111;
}

.apps {
    display: flex;
    gap: 10px;
}

.apps button {
    position: relative;
    width: 56px;
    height: 56px;
    border-radius: 6px;
}

.apps svg {
    width: 36px;
    height: 36px;
}

.apps .running::after {
    content: "";
    position: absolute;
    left: 50%;
    bottom: 0;
    width: 10px;
    height: 5px;
    margin-left: -5px;
    border-radius: 3px;
    background: #7c828e;
}

.apps .current {
    background: #ebeff9;
    box-shadow: 0 0 2px #b8c2d6;
}

.apps .current::after {
    width: 24px;
    margin-left: -12px;
    background: #0078d4;
}

.tray {
    justify-self: end;
    display: flex;
    align-items: center;
}

.lang {
    margin: 0 28px 0 25px;
    text-align: center;
}

.status {
    gap: 12px;
    margin-right: 28px;
}

.clock {
    text-align: right;
}

.badge {
    width: 24px;
    height: 24px;
    margin-left: 11px;
    border-radius: 50%;
    background: #0078d4;
    color: #fff;
    font-size: 15px;
    text-align: center;
}
```
